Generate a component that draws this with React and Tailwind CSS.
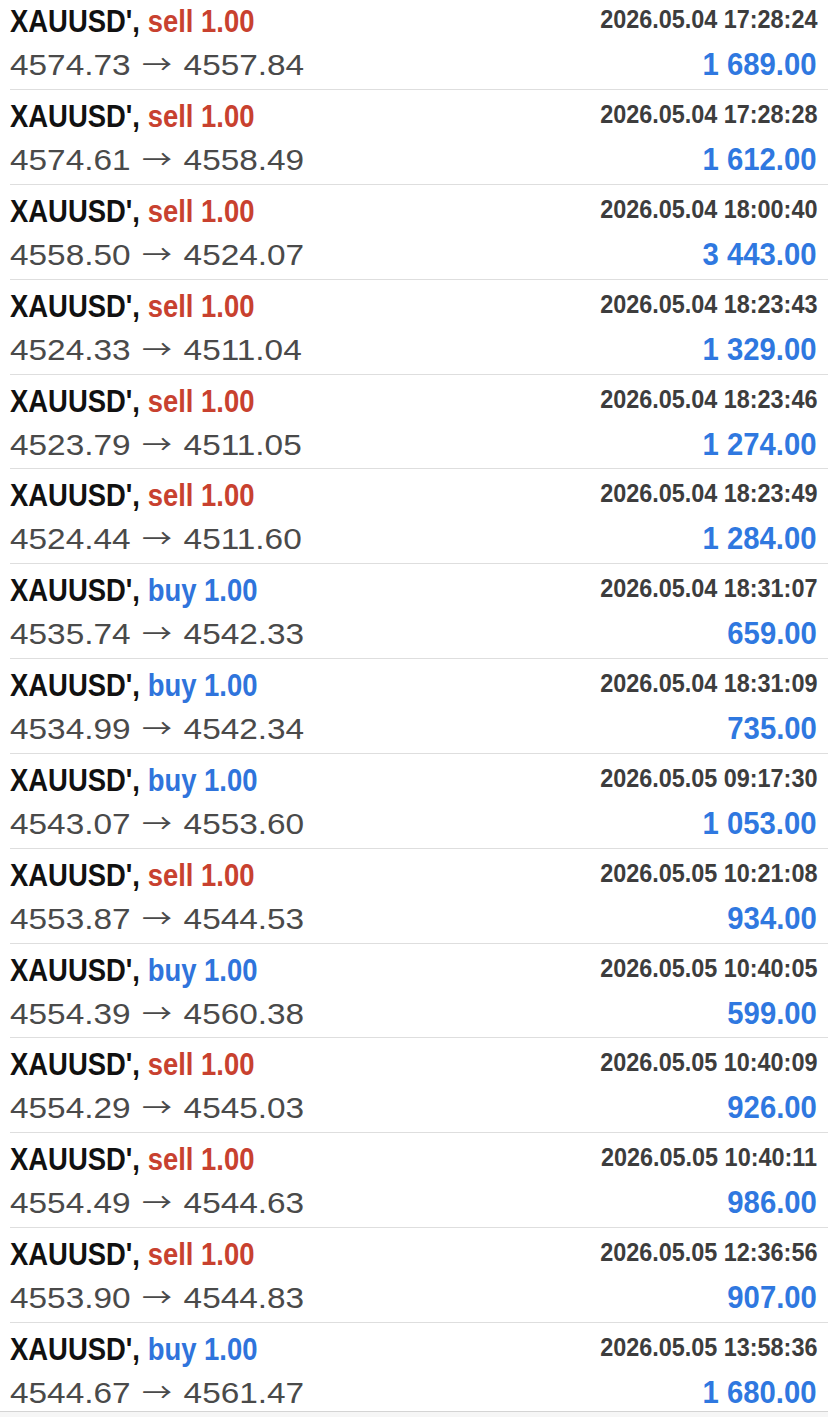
import React from "react";

// Trade history list — closed XAUUSD' positions.
// Each row: symbol + side/volume, open → close price, close time, profit.

const trades = [
  ["sell", "4574.73", "4557.84", "2026.05.04 17:28:24", "1 689.00"],
  ["sell", "4574.61", "4558.49", "2026.05.04 17:28:28", "1 612.00"],
  ["sell", "4558.50", "4524.07", "2026.05.04 18:00:40", "3 443.00"],
  ["sell", "4524.33", "4511.04", "2026.05.04 18:23:43", "1 329.00"],
  ["sell", "4523.79", "4511.05", "2026.05.04 18:23:46", "1 274.00"],
  ["sell", "4524.44", "4511.60", "2026.05.04 18:23:49", "1 284.00"],
  ["buy", "4535.74", "4542.33", "2026.05.04 18:31:07", "659.00"],
  ["buy", "4534.99", "4542.34", "2026.05.04 18:31:09", "735.00"],
  ["buy", "4543.07", "4553.60", "2026.05.05 09:17:30", "1 053.00"],
  ["sell", "4553.87", "4544.53", "2026.05.05 10:21:08", "934.00"],
  ["buy", "4554.39", "4560.38", "2026.05.05 10:40:05", "599.00"],
  ["sell", "4554.29", "4545.03", "2026.05.05 10:40:09", "926.00"],
  ["sell", "4554.49", "4544.63", "2026.05.05 10:40:11", "986.00"],
  ["sell", "4553.90", "4544.83", "2026.05.05 12:36:56", "907.00"],
  ["buy", "4544.67", "4561.47", "2026.05.05 13:58:36", "1 680.00"],
];

function TradeRow({ side, open, close, time, profit, last }) {
  return (
    <div
      className={
        last
          ? "ml-[10px] pr-[11px] pt-[11px] h-[88px]"
          : "ml-[10px] pr-[11px] pt-[11px] h-[94.85px] border-b border-[#dedede]"
      }
    >
      <div className="flex items-start justify-between">
        <span className="block whitespace-nowrap origin-left scale-x-[0.885] text-[31px] leading-[31px] font-bold text-[#111111]">
          XAUUSD',{" "}
          <span className={side === "sell" ? "text-[#c8412f]" : "text-[#2f74dc]"}>
            {side} 1.00
          </span>
        </span>
        <span className="block whitespace-nowrap origin-right scale-x-[0.9] text-[26px] leading-[27px] font-bold text-[#3d3d3d]">
          {time}
        </span>
      </div>
      <div className="mt-[11px] flex items-baseline justify-between">
        <span className="block whitespace-nowrap origin-left scale-x-[1.15] text-[29px] leading-[32px] text-[#4a4a4a]">
          {open}{" "}
          <span className="relative -top-[1px] mx-[2px] text-[26px] font-['Noto_Sans_CJK_JP',sans-serif]">→</span>{" "}
          {close}
        </span>
        <span className="block whitespace-nowrap origin-right scale-x-[0.915] text-[32px] leading-[32px] font-bold text-[#2f78e0]">
          {profit}
        </span>
      </div>
    </div>
  );
}

export default function App() {
  return (
    <div
      className="w-[828px] h-[1417px] overflow-hidden bg-white"
      style={{ fontFamily: '"Liberation Sans", Arial, sans-serif' }}
    >
      <div className="mt-[-4.85px]">
        {trades.map(([side, open, close, time, profit], i) => (
          <TradeRow
            key={time}
            side={side}
            open={open}
            close={close}
            time={time}
            profit={profit}
            last={i === trades.length - 1}
          />
        ))}
      </div>
      <div className="h-[10px] border-t border-[#d4d4d4] bg-[#f6f6f6]" />
    </div>
  );
}
